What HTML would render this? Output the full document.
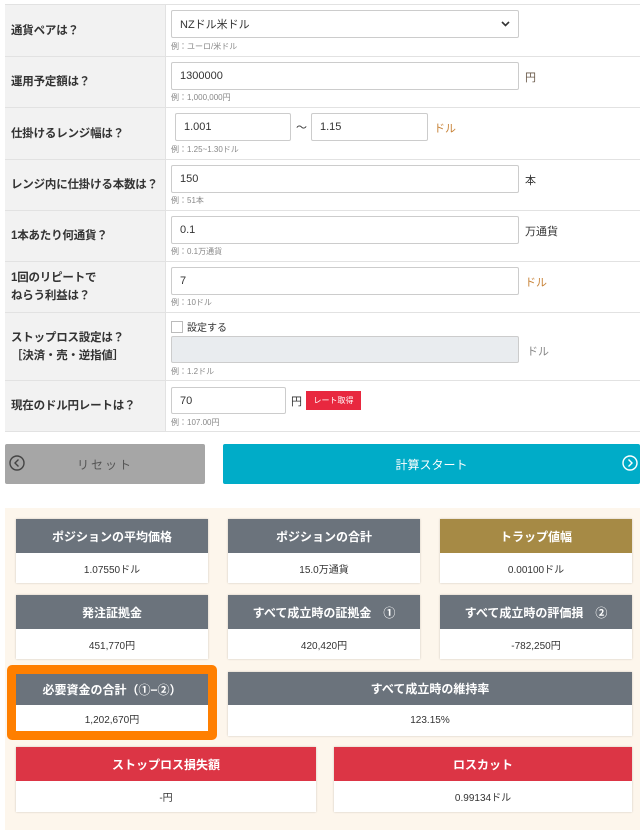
<!DOCTYPE html>
<html><head><meta charset="utf-8"><style>
*{box-sizing:border-box;margin:0;padding:0}
body{width:640px;height:832px;background:#fff;position:relative;overflow:hidden;font-family:"Liberation Sans","Noto Sans CJK JP",sans-serif;color:#333}
.a{position:absolute}
.lab{position:absolute;left:5px;width:160px;background:#f2f2f2;border-bottom:1px solid #e2e2e2;font-size:11.5px;font-weight:bold;padding-left:6px;display:flex;align-items:center;line-height:18px;white-space:nowrap;letter-spacing:-0.2px}
.cel{position:absolute;left:165px;width:475px;border-bottom:1px solid #e2e2e2;border-left:1px solid #e2e2e2}
.in{position:absolute;border:1px solid #ccc;background:#fff;font-size:11px;padding-left:8px;display:flex;align-items:center;border-radius:2px}
.h{position:absolute;left:171px;font-size:8px;color:#888}
.u{position:absolute;font-size:11px;color:#333}
.or{color:#c8843a}
.bx{position:absolute;background:#fff;box-shadow:0 0 2px rgba(0,0,0,.2)}
.hd{height:34px;background:#6b737c;color:#fff;font-weight:bold;font-size:12px;display:flex;align-items:center;justify-content:center}
.vl{display:flex;align-items:center;justify-content:center;font-size:10px;color:#333}
</style></head><body>
<div class="a" style="left:5px;top:4px;width:635px;height:1px;background:#e2e2e2"></div>
<div class="lab" style="top:5px;height:52px">通貨ペアは？</div>
<div class="lab" style="top:57px;height:51px">運用予定額は？</div>
<div class="lab" style="top:108px;height:52px">仕掛けるレンジ幅は？</div>
<div class="lab" style="top:160px;height:51px">レンジ内に仕掛ける本数は？</div>
<div class="lab" style="top:211px;height:51px">1本あたり何通貨？</div>
<div class="lab" style="top:262px;height:51px">1回のリピートで<br>ねらう利益は？</div>
<div class="lab" style="top:313px;height:68px">ストップロス設定は？<br>［決済・売・逆指値］</div>
<div class="lab" style="top:381px;height:51px">現在のドル円レートは？</div>
<div class="cel" style="top:5px;height:52px"></div>
<div class="cel" style="top:57px;height:51px"></div>
<div class="cel" style="top:108px;height:52px"></div>
<div class="cel" style="top:160px;height:51px"></div>
<div class="cel" style="top:211px;height:51px"></div>
<div class="cel" style="top:262px;height:51px"></div>
<div class="cel" style="top:313px;height:68px"></div>
<div class="cel" style="top:381px;height:51px"></div>

<div class="in" style="left:171px;top:10px;width:348px;height:28px">NZドル米ドル<svg style="position:absolute;right:8px;top:10px" width="9" height="6" viewBox="0 0 9 6"><path d="M1 1l3.5 3.5L8 1" stroke="#333" stroke-width="1.6" fill="none"/></svg></div>
<div class="h" style="top:41px">例：ユーロ/米ドル</div>
<div class="in" style="left:171px;top:62px;width:348px;height:28px">1300000</div><div class="u" style="left:525px;top:69px;color:#6a5a4a">円</div>
<div class="h" style="top:92px">例：1,000,000円</div>
<div class="in" style="left:175px;top:113px;width:116px;height:28px">1.001</div><div class="u" style="left:296px;top:119px">～</div>
<div class="in" style="left:311px;top:113px;width:117px;height:28px">1.15</div><div class="u or" style="left:434px;top:120px">ドル</div>
<div class="h" style="top:144px">例：1.25~1.30ドル</div>
<div class="in" style="left:171px;top:165px;width:348px;height:28px">150</div><div class="u" style="left:525px;top:172px">本</div>
<div class="h" style="top:195px">例：51本</div>
<div class="in" style="left:171px;top:216px;width:348px;height:28px">0.1</div><div class="u" style="left:525px;top:223px">万通貨</div>
<div class="h" style="top:246px">例：0.1万通貨</div>
<div class="in" style="left:171px;top:267px;width:348px;height:28px">7</div><div class="u or" style="left:525px;top:274px">ドル</div>
<div class="h" style="top:297px">例：10ドル</div>
<div class="a" style="left:171px;top:321px;width:12px;height:12px;border:1px solid #bbb"></div><div class="u" style="left:187px;top:319px;font-size:10px">設定する</div>
<div class="in" style="left:171px;top:336px;width:348px;height:27px;background:#e9ecef"></div><div class="u" style="left:527px;top:343px;color:#888">ドル</div>
<div class="h" style="top:366px">例：1.2ドル</div>
<div class="in" style="left:171px;top:387px;width:115px;height:27px">70</div><div class="u" style="left:291px;top:393px">円</div>
<div class="a" style="left:306px;top:391px;width:55px;height:19px;background:#e8283f;color:#fff;font-size:8px;display:flex;align-items:center;justify-content:center">レート取得</div>
<div class="h" style="top:417px">例：107.00円</div>

<div class="a" style="left:5px;top:444px;width:200px;height:40px;background:#a6a6a6;border-radius:2px;color:#555;font-size:12px;display:flex;align-items:center;justify-content:center;letter-spacing:2px">リセット</div>
<svg class="a" style="left:9px;top:455px" width="16" height="16" viewBox="0 0 16 16"><circle cx="8" cy="8" r="7" stroke="#444" stroke-width="1.4" fill="none"/><path d="M9.5 4.5L6 8l3.5 3.5" stroke="#444" stroke-width="1.4" fill="none"/></svg>
<div class="a" style="left:223px;top:444px;width:417px;height:40px;background:#00acc8;border-radius:2px;color:#fff;font-size:12px;display:flex;align-items:center;justify-content:center">計算スタート</div>
<svg class="a" style="left:622px;top:455px" width="16" height="16" viewBox="0 0 16 16"><circle cx="8" cy="8" r="7" stroke="#fff" stroke-width="1.4" fill="none"/><path d="M6.5 4.5L10 8l-3.5 3.5" stroke="#fff" stroke-width="1.4" fill="none"/></svg>

<div class="a" style="left:5px;top:508px;width:635px;height:322px;background:#fdf6ec"></div>
<div class="bx" style="left:16px;top:519px;width:192px;height:64px"><div class="hd">ポジションの平均価格</div><div class="vl" style="height:30px">1.07550ドル</div></div>
<div class="bx" style="left:228px;top:519px;width:192px;height:64px"><div class="hd">ポジションの合計</div><div class="vl" style="height:30px">15.0万通貨</div></div>
<div class="bx" style="left:440px;top:519px;width:192px;height:64px"><div class="hd" style="background:#a68a45">トラップ値幅</div><div class="vl" style="height:30px">0.00100ドル</div></div>
<div class="bx" style="left:16px;top:595px;width:192px;height:64px"><div class="hd">発注証拠金</div><div class="vl" style="height:30px">451,770円</div></div>
<div class="bx" style="left:228px;top:595px;width:192px;height:64px"><div class="hd">すべて成立時の証拠金　①</div><div class="vl" style="height:30px">420,420円</div></div>
<div class="bx" style="left:440px;top:595px;width:192px;height:64px"><div class="hd">すべて成立時の評価損　②</div><div class="vl" style="height:30px">-782,250円</div></div>
<div class="a" style="left:7px;top:665px;width:210px;height:75px;background:#ff7f00;border-radius:5px"></div>
<div class="bx" style="left:16px;top:674px;width:192px;height:57px;box-shadow:none"><div class="hd" style="height:31px">必要資金の合計（①−②）</div><div class="vl" style="height:26px">1,202,670円</div></div>
<div class="bx" style="left:228px;top:672px;width:404px;height:64px"><div class="hd" style="height:33px">すべて成立時の維持率</div><div class="vl" style="height:31px">123.15%</div></div>
<div class="bx" style="left:16px;top:747px;width:300px;height:65px"><div class="hd" style="background:#dc3545">ストップロス損失額</div><div class="vl" style="height:31px">-円</div></div>
<div class="bx" style="left:334px;top:747px;width:298px;height:65px"><div class="hd" style="background:#dc3545">ロスカット</div><div class="vl" style="height:31px">0.99134ドル</div></div>
</body></html>
